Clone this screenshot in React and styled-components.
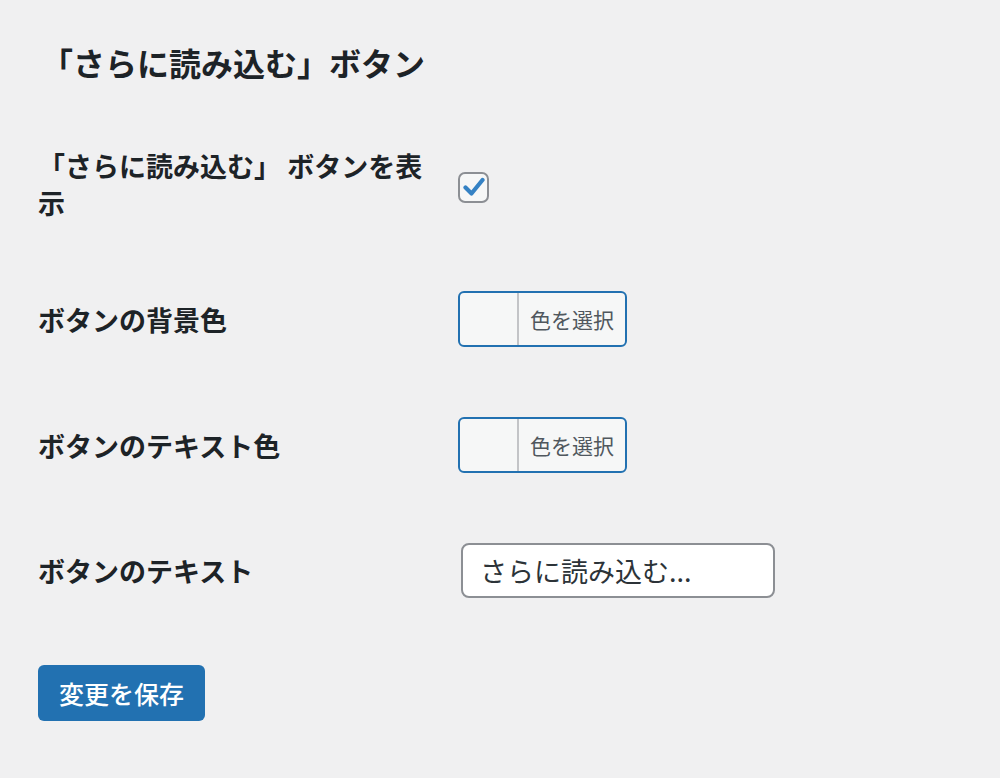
import React, { useState } from "react";
import styled, { createGlobalStyle } from "styled-components";

const GlobalStyle = createGlobalStyle`
  html, body {
    margin: 0;
    padding: 0;
    background: #f0f0f1;
  }
  body {
    font-family: "Noto Sans CJK JP", "Noto Sans", sans-serif;
    color: #1d2327;
  }
`;

const Page = styled.div`
  min-height: 778px;
  padding: 40px 0 0 38px;
  box-sizing: border-box;
`;

const Title = styled.h2`
  margin: 0 0 63px 3px;
  font-size: 32px;
  line-height: 44px;
  font-weight: 700;
`;

const Form = styled.form`
  display: flex;
  flex-direction: column;
  gap: 70px;
`;

const Row = styled.div`
  display: grid;
  grid-template-columns: 400px 1fr;
  column-gap: 20px;
  align-items: center;
`;

const Label = styled.label`
  font-size: 27px;
  line-height: 37px;
  font-weight: 700;
  width: 400px;
`;

const CheckBox = styled.span`
  width: 27px;
  height: 27px;
  margin-top: 6px;
  border: 2px solid #8c8f94;
  border-radius: 7px;
  background: #f6f7f7;
  display: flex;
  align-items: center;
  justify-content: center;
  cursor: pointer;
`;

const ColorButton = styled.button`
  display: flex;
  align-items: stretch;
  width: 169px;
  height: 56px;
  padding: 0;
  border: 2px solid #2271b1;
  border-radius: 6px;
  background: #f6f7f7;
  overflow: hidden;
  cursor: pointer;
  font-family: inherit;
`;

const Swatch = styled.span`
  width: 57px;
  border-right: 2px solid #c3c4c7;
  background: ${(p) => p.color || "transparent"};
`;

const ColorText = styled.span`
  flex: 1;
  display: flex;
  align-items: center;
  justify-content: center;
  font-size: 21px;
  color: #50575e;
`;

const TextInput = styled.input`
  width: 314px;
  height: 55px;
  margin-left: 3px;
  box-sizing: border-box;
  padding: 0 16px 0 17px;
  border: 2px solid #8c8f94;
  border-radius: 8px;
  background: #fff;
  font-family: inherit;
  font-size: 27px;
  color: #2c3338;
  outline: none;
`;

const Submit = styled.div`
  margin-top: -3px;
`;

const SaveButton = styled.button`
  height: 56px;
  padding: 0 21px;
  border: none;
  border-radius: 6px;
  background: #2271b1;
  color: #fff;
  font-family: inherit;
  font-size: 25px;
  font-weight: 500;
  cursor: pointer;
`;

const CheckIcon = () => (
  <svg width="22" height="20" viewBox="0 0 22 20">
    <path
      d="M2.5 10.5 L8.5 16.5 L19.5 3"
      fill="none"
      stroke="#3582c4"
      strokeWidth="4.2"
      strokeLinecap="round"
      strokeLinejoin="round"
    />
  </svg>
);

export default function App() {
  const [checked, setChecked] = useState(true);
  const [text, setText] = useState("さらに読み込む...");

  return (
    <Page>
      <GlobalStyle />
      <Title>「さらに読み込む」ボタン</Title>
      <Form onSubmit={(e) => e.preventDefault()}>
        <Row>
          <Label>「さらに読み込む」 ボタンを表示</Label>
          <CheckBox onClick={() => setChecked(!checked)}>
            {checked && <CheckIcon />}
          </CheckBox>
        </Row>
        <Row>
          <Label>ボタンの背景色</Label>
          <ColorButton type="button">
            <Swatch />
            <ColorText>色を選択</ColorText>
          </ColorButton>
        </Row>
        <Row>
          <Label>ボタンのテキスト色</Label>
          <ColorButton type="button">
            <Swatch />
            <ColorText>色を選択</ColorText>
          </ColorButton>
        </Row>
        <Row>
          <Label>ボタンのテキスト</Label>
          <TextInput value={text} onChange={(e) => setText(e.target.value)} />
        </Row>
        <Submit>
          <SaveButton type="submit">変更を保存</SaveButton>
        </Submit>
      </Form>
    </Page>
  );
}
